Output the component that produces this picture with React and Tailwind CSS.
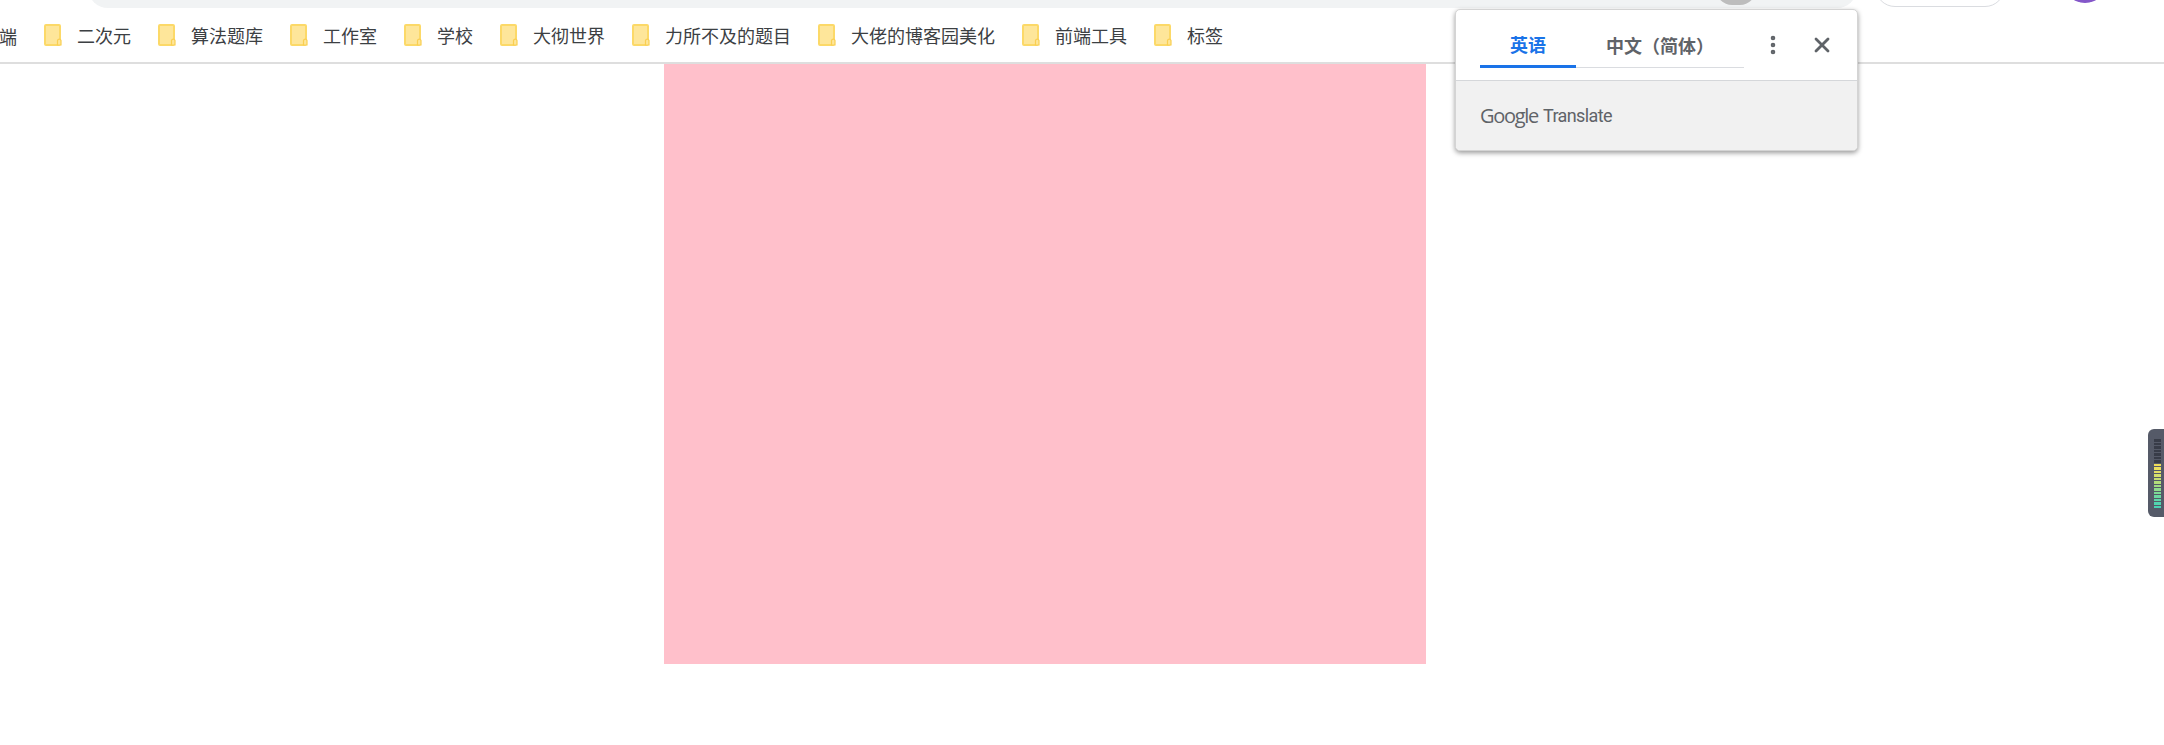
import { MoreVertical, X } from 'lucide-react'

const CJK = "font-['Noto_Sans_CJK_SC','Liberation_Sans',sans-serif]"

const BOOKMARKS = [
  '二次元', '算法题库', '工作室', '学校', '大彻世界',
  '力所不及的题目', '大佬的博客园美化', '前端工具', '标签',
]

// 音量条的颜色，从上到下
const METER = [
  '#383c48', '#383c48', '#383c48', '#383c48', '#383c48', '#383c48', '#383c48',
  '#f0dc5a', '#ece060', '#e2e066', '#d4e06c', '#c4de72', '#b2de7a',
  '#a0dc82', '#8edc8c', '#7cda96', '#6cd8a0', '#5ed6a8', '#52d4ae', '#4ad2b2',
]

function Folder() {
  return (
    <svg width="18" height="22" viewBox="0 0 18 22" className="shrink-0">
      <rect x="1" y="1" width="15" height="20" rx="1" fill="#fee69a" stroke="#fcd968" strokeWidth="2" />
      <path d="M13.5 21v-4.5a1.8 1.8 0 0 1 3.5 0V21z" fill="#fee69a" stroke="#f9cf52" strokeWidth="1.2" />
    </svg>
  )
}

function TopStrip() {
  return (
    <div className="flex h-2 items-end overflow-hidden">
      <div className="relative ml-[88px] h-10 w-[1769px] shrink-0 rounded-b-[20px] bg-[#f1f3f4]">
        <div className="absolute bottom-[3px] left-[1628px] h-8 w-[40px] rounded-full bg-[#bdbdbd]" />
      </div>
      <div className="mb-px ml-[18px] h-10 w-[130px] shrink-0 rounded-b-[20px] border border-[#dadce0]" />
      <div className="mb-[5px] ml-[58px] size-11 shrink-0 rounded-full bg-[#8457c9]" />
    </div>
  )
}

function BookmarkBar() {
  return (
    <div className={`flex h-14 items-center overflow-hidden border-b-2 border-[#dedede] bg-white text-[18px] leading-none text-[#3c4043] ${CJK}`}>
      <div className="flex items-center pl-[44px]">
        {BOOKMARKS.map(name => (
          <div key={name} className="mr-[27px] flex shrink-0 items-center">
            <Folder />
            <span className="ml-[15px] whitespace-nowrap">{name}</span>
          </div>
        ))}
      </div>
      <span className="absolute -left-px top-[27px]">端</span>
    </div>
  )
}

function TranslatePopup() {
  return (
    <div className={`absolute left-[1455px] top-[9px] w-[403px] overflow-hidden rounded-[5px] border border-[#d4d4d4] bg-white shadow-[0_2px_5px_rgba(0,0,0,0.4)] ${CJK}`}>
      <div className="flex h-[71px] border-b border-[#d5d7da] pl-6">
        <div className="flex h-[58px] w-[264px] border-b border-[#dadce0]">
          <div className="-mb-px flex w-[96px] items-center justify-center border-b-[3px] border-[#1a73e8] pt-[13px] text-[18px] font-bold text-[#1a73e8]">
            英语
          </div>
          <div className="flex items-center pl-[30px] pt-[13px] text-[18px] font-bold text-[#5f6368]">
            中文（简体）
          </div>
        </div>
        <MoreVertical size={24} strokeWidth={2.6} className="ml-[17px] mt-[23px] text-[#5f6368]" />
        <X size={24} strokeWidth={2.8} className="ml-[25px] mt-[23px] text-[#5f6368]" />
      </div>
      <div className="flex h-[69px] items-center gap-[5px] bg-[#f1f1f1] pl-6 text-[#5f6368]">
        <span className="font-['Open_Sans',sans-serif] text-[20px] leading-none tracking-[-1.3px]">Google</span>
        <span className="font-['Roboto',sans-serif] text-[18px] leading-none tracking-[-0.6px]">Translate</span>
      </div>
    </div>
  )
}

function SideMeter() {
  return (
    <div className="absolute right-0 top-[429px] flex h-[88px] w-4 flex-col items-end gap-px rounded-l-[6px] bg-[#555a68] pr-[3px] pt-[10px]">
      {METER.map((color, i) => (
        <div key={i} className="h-[2.5px] w-[7px] shrink-0" style={{ background: color }} />
      ))}
    </div>
  )
}

export default function App() {
  return (
    <div className="relative h-[745px] w-[2164px] overflow-hidden bg-white">
      <TopStrip />
      <BookmarkBar />
      <div className="ml-[664px] h-[600px] w-[762px] bg-[#ffc0cb]" />
      <TranslatePopup />
      <SideMeter />
    </div>
  )
}
